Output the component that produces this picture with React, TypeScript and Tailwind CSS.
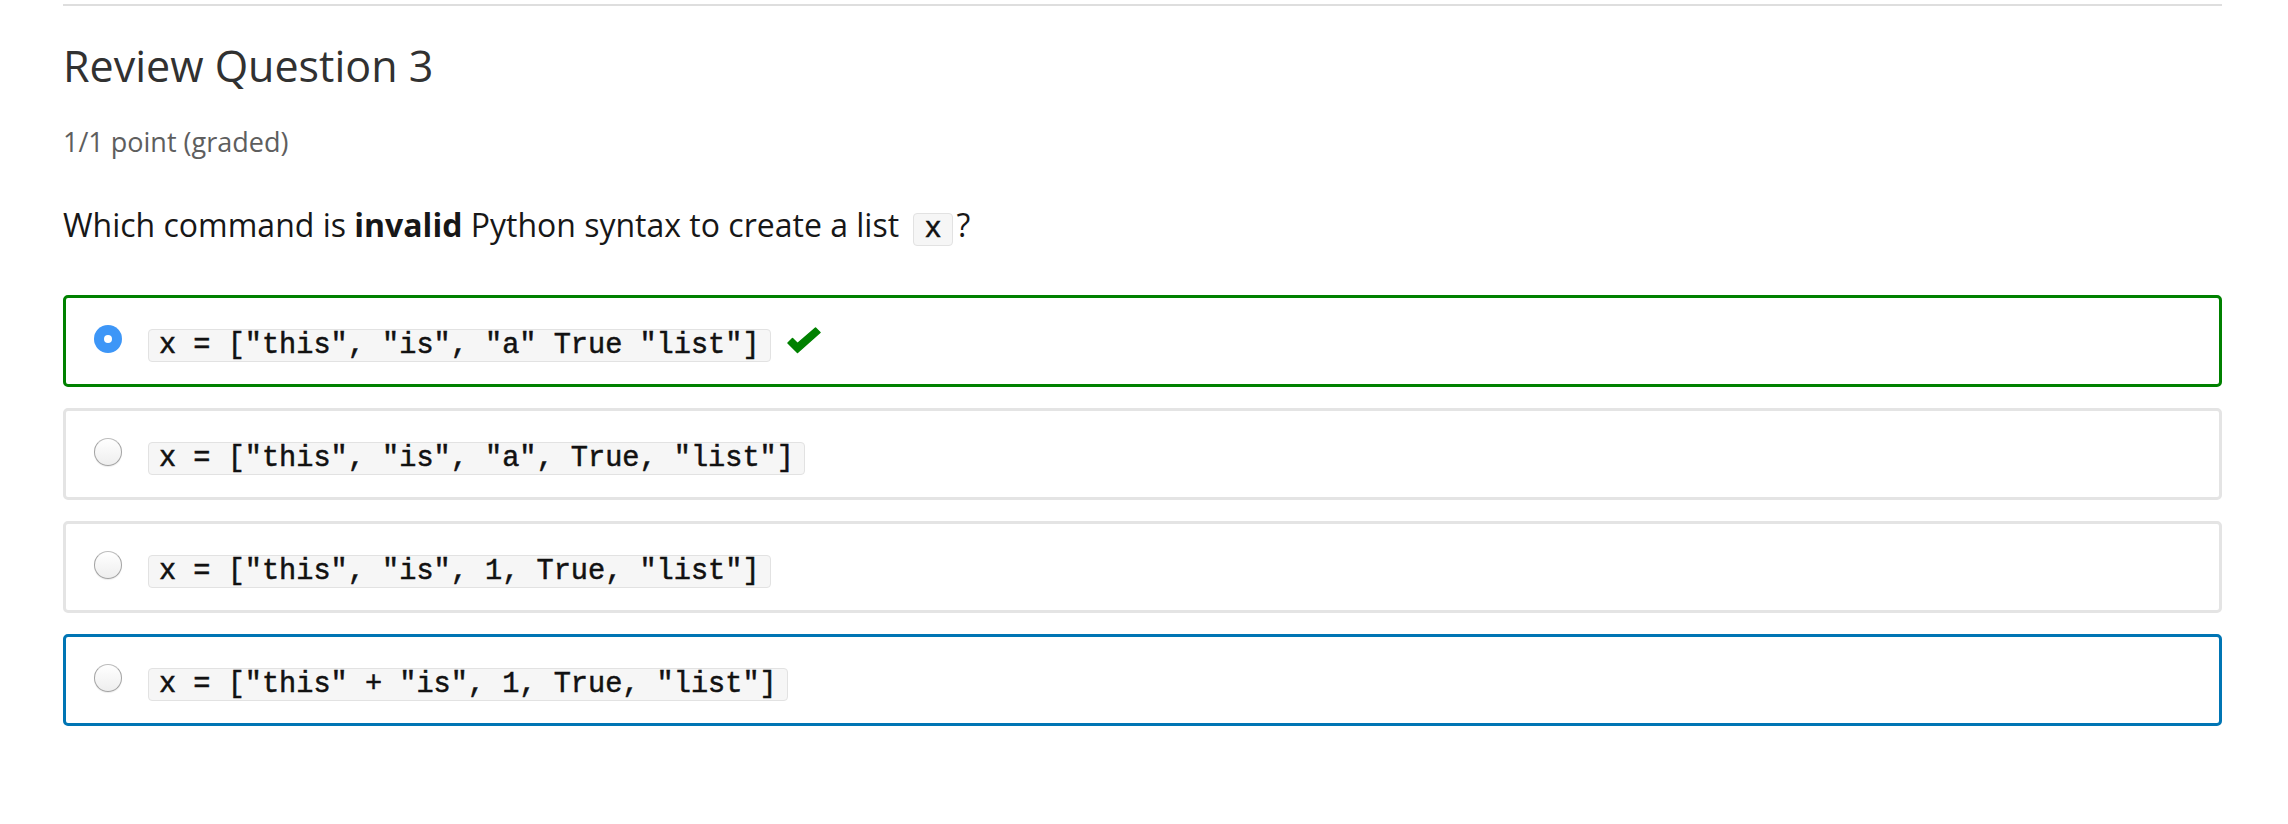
type Choice = {
  code: string
  state: "correct" | "plain" | "focus"
  checked?: boolean
}

const choices: Choice[] = [
  { code: 'x = ["this", "is", "a" True "list"]', state: "correct", checked: true },
  { code: 'x = ["this", "is", "a", True, "list"]', state: "plain" },
  { code: 'x = ["this", "is", 1, True, "list"]', state: "plain" },
  { code: 'x = ["this" + "is", 1, True, "list"]', state: "focus" },
]

function Code({ children }: Readonly<{ children: React.ReactNode }>) {
  return (
    <code className="inline-block h-[33px] whitespace-pre rounded-[4px] border border-[#e2e2e2] bg-[#f6f6f6] px-[10px] font-['Liberation_Mono',monospace] text-[28.6px] leading-[31px] text-[#111] [-webkit-text-stroke:0.5px_#111]">
      {children}
    </code>
  )
}

function Radio({ checked }: Readonly<{ checked?: boolean }>) {
  return checked ? (
    <div className="flex size-[28px] shrink-0 items-center justify-center rounded-full bg-[#3d96f7]">
      <div className="size-[8px] rounded-full bg-white" />
    </div>
  ) : (
    <div className="size-[28px] shrink-0 rounded-full border-[1.5px] border-[#a3a3a3] border-t-[#bdbdbd] bg-gradient-to-b from-white to-[#eeeeee] shadow-[0_1px_1px_rgba(0,0,0,0.08)]" />
  )
}

function Check() {
  return (
    <svg
      width="34"
      height="27"
      viewBox="0 0 34 27"
      className="mt-[2px] ml-[16px] shrink-0"
    >
      <polygon
        points="1,16 5.5,11.5 10.5,16.5 28.5,1 33,5.5 10.5,25.5"
        fill="#008100"
        stroke="#008100"
        strokeWidth="1.5"
        strokeLinejoin="round"
      />
    </svg>
  )
}

export default function App() {
  return (
    <div className="min-h-[824px] bg-white pl-[63px] pr-[66px] pt-[4px] font-['Open_Sans',sans-serif]">
      <div className="h-[2px] bg-[#dedede]" />

      <h2 className="mt-[38px] text-[43px] leading-[43px] font-normal text-[#313131]">
        Review Question 3
      </h2>

      <div className="mt-[41px] text-[27px] leading-[27px] text-[#5e5e5e]">
        1/1 point (graded)
      </div>

      <p className="mt-[54px] text-[32px] leading-[32px] text-[#171717]">
        Which command is <strong className="font-bold">invalid</strong> Python
        syntax to create a list{" "}
        <span className="mr-[4px] ml-[6px]">
          <Code>x</Code>
        </span>
        ?
      </p>

      <div className="mt-[49px] flex flex-col gap-[21px]">
        {choices.map((choice, i) => (
          <div
            key={`choice-${i.toString()}`}
            className={`flex h-[92px] items-start rounded-[5px] border-[3px] pt-[27px] pl-[28px] ${
              choice.state === "correct"
                ? "border-[#008100]"
                : choice.state === "focus"
                  ? "border-[#0075b4]"
                  : "border-[#e4e4e4]"
            }`}
          >
            <Radio checked={choice.checked} />
            <div className="mt-[4px] ml-[26px]">
              <Code>{choice.code}</Code>
            </div>
            {choice.state === "correct" && <Check />}
          </div>
        ))}
      </div>
    </div>
  )
}
